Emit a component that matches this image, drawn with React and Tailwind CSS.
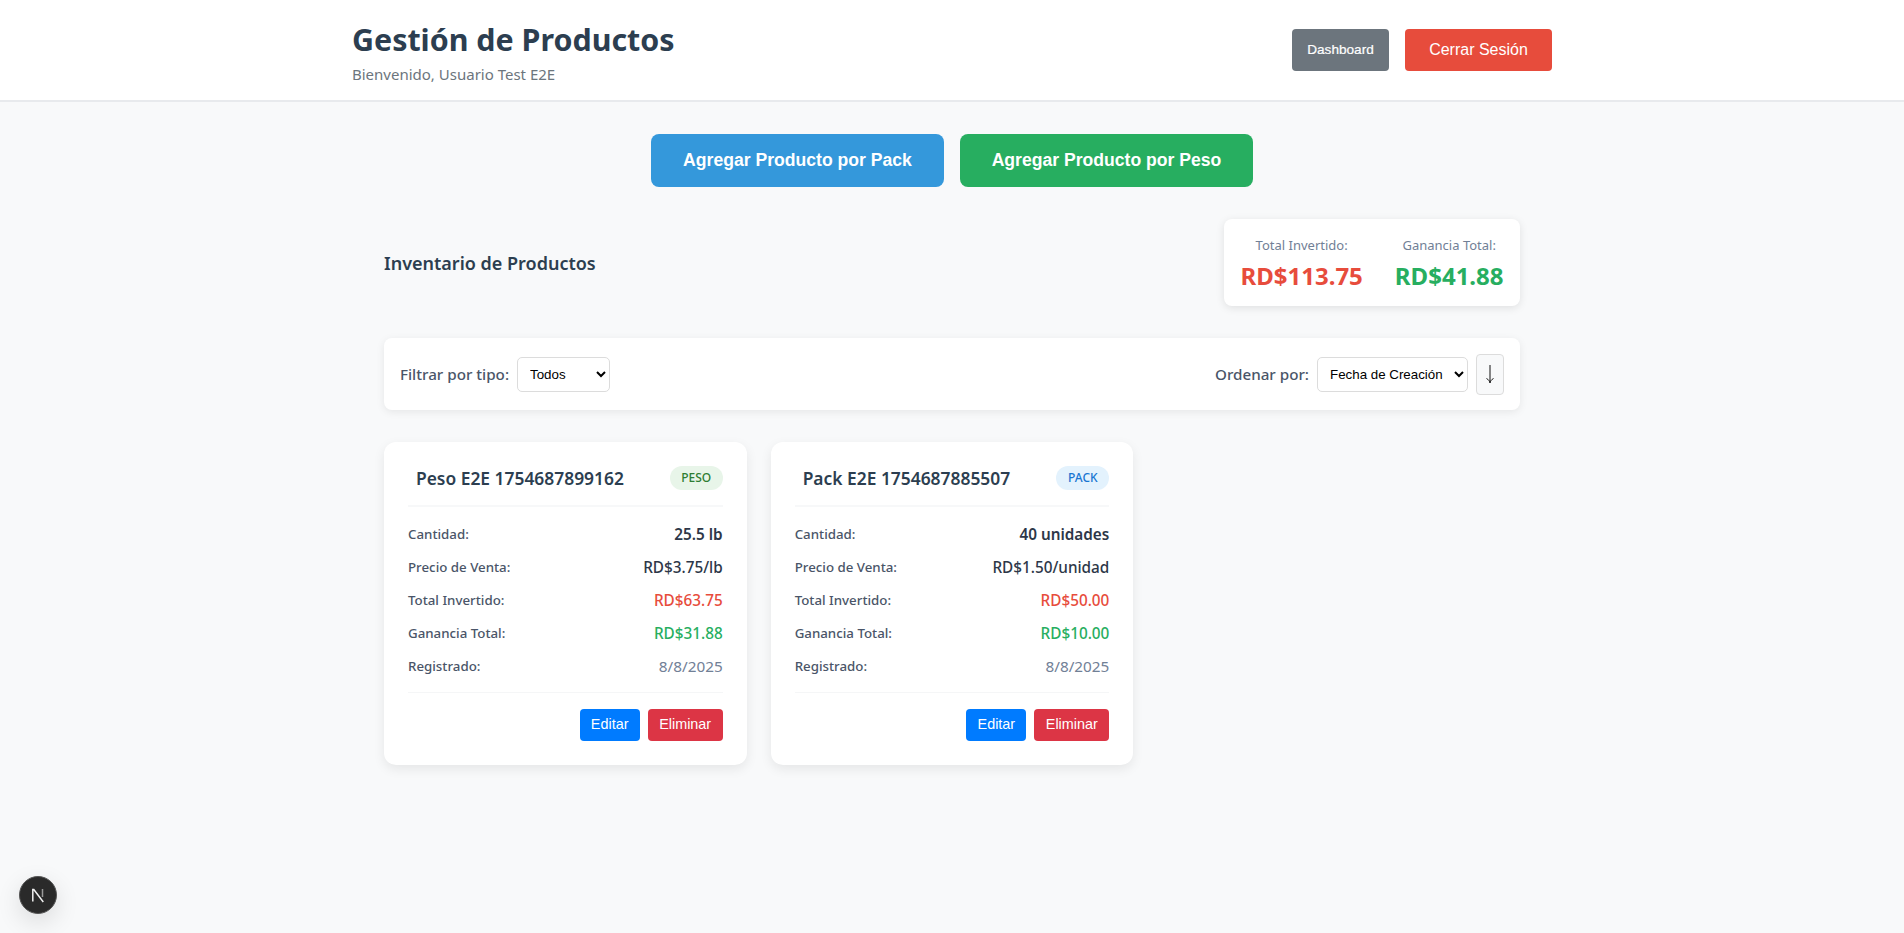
const body = '[font-family:"Noto_Sans","Open_Sans",sans-serif]';

function Row({ label, value, valueClass }) {
  return (
    <div className="flex items-center justify-between h-[33px]">
      <span className="text-[13.3px] font-medium text-[#4a5568]">{label}</span>
      <span className={`text-[15.3px] ${valueClass}`}>{value}</span>
    </div>
  );
}

function Card({ name, badge, badgeClass, qty, price, inv, gain }) {
  return (
    <div className="bg-white rounded-xl shadow-[0_4px_12px_rgba(0,0,0,0.08)] p-6">
      <div className="flex items-center justify-between pb-[15px] border-b-2 border-[#f7f8f9]">
        <span className="ml-[8px] text-[17.4px] leading-6 font-semibold text-[#2c3e50]">{name}</span>
        <span className={`w-[53px] h-6 rounded-full flex items-center justify-center text-[12px] font-medium ${badgeClass}`}>{badge}</span>
      </div>
      <div className="pt-[11px] pb-[9px] border-b border-[#f5f6f7]">
        <Row label="Cantidad:" value={qty} valueClass="font-semibold text-[#2d3748]" />
        <Row label="Precio de Venta:" value={price} valueClass="font-medium text-[#2d3748]" />
        <Row label="Total Invertido:" value={inv} valueClass="font-medium text-[#e74c3c]" />
        <Row label="Ganancia Total:" value={gain} valueClass="font-medium text-[#27ae60]" />
        <Row label="Registrado:" value="8/8/2025" valueClass="text-[#718096]" />
      </div>
      <div className="flex justify-end gap-2 pt-4 [font-family:'Liberation_Sans',Arial,sans-serif]">
        <button className="w-[60px] h-8 rounded bg-[#007bff] text-white text-[14.4px]">Editar</button>
        <button className="w-[75px] h-8 rounded bg-[#dc3545] text-white text-[14.4px]">Eliminar</button>
      </div>
    </div>
  );
}

export default function App() {
  return (
    <div className={`min-h-[933px] bg-[#f8f9fa] relative ${body}`}>
      <header className="h-[102px] bg-white border-b-2 border-[#e8eaed]">
        <div className="w-[1200px] mx-auto h-full flex items-center justify-between">
          <div className="mt-[2px]">
            <h1 className="text-[30.4px] leading-[43px] mb-[2px] font-bold text-[#2c3e50]">Gestión de Productos</h1>
            <p className="text-[15px] leading-[22px] text-[#6c757d]">Bienvenido, Usuario Test E2E</p>
          </div>
          <div className="flex items-center gap-4 [font-family:'Liberation_Sans',Arial,sans-serif]">
            <button className="w-[97px] h-[42px] rounded bg-[#6c757d] text-white text-[13.6px] [-webkit-text-stroke:0.2px_white]">Dashboard</button>
            <button className="w-[147px] h-[42px] rounded bg-[#e74c3c] text-white text-[16px]">Cerrar Sesión</button>
          </div>
        </div>
      </header>

      <main className="w-[1136px] mx-auto">
        <div className="flex justify-center gap-4 pt-8 [font-family:'Liberation_Sans',Arial,sans-serif]">
          <button className="w-[293px] h-[53px] rounded-lg bg-[#3498db] text-white text-[17.6px] font-bold">Agregar Producto por Pack</button>
          <button className="w-[293px] h-[53px] rounded-lg bg-[#27ae60] text-white text-[17.6px] font-bold">Agregar Producto por Peso</button>
        </div>

        <div className="flex items-center justify-between mt-8">
          <h2 className="text-[18px] mt-[2px] font-semibold text-[#2c3e50]">Inventario de Productos</h2>
          <div className="w-[296px] h-[87px] bg-white rounded-lg shadow-[0_2px_8px_rgba(0,0,0,0.1)] flex items-center justify-center gap-8">
            <div className="text-center">
              <div className="text-[13px] leading-5 mt-[1px] text-[#718096]">Total Invertido:</div>
              <div className="text-[24px] leading-[33px] mt-[4px] font-bold text-[#e74c3c]">RD$113.75</div>
            </div>
            <div className="text-center">
              <div className="text-[13px] leading-5 mt-[1px] text-[#718096]">Ganancia Total:</div>
              <div className="text-[24px] leading-[33px] mt-[4px] font-bold text-[#27ae60]">RD$41.88</div>
            </div>
          </div>
        </div>

        <div className="h-[72px] mt-8 bg-white rounded-lg shadow-[0_2px_8px_rgba(0,0,0,0.08)] px-4 flex items-center justify-between">
          <div className="flex items-center gap-2">
            <span className="text-[15.2px] font-medium text-[#4a5568]">Filtrar por tipo:</span>
            <select className="w-[93px] h-[35px] px-[8px] bg-white border border-[#dcdcdc] rounded-[5px] text-[13.33px] text-black [font-family:'Liberation_Sans',Arial,sans-serif]">
              <option>Todos</option>
            </select>
          </div>
          <div className="flex items-center gap-2">
            <span className="text-[15.2px] font-medium text-[#4a5568]">Ordenar por:</span>
            <select className="w-[151px] h-[35px] px-[8px] bg-white border border-[#dcdcdc] rounded-[5px] text-[13.33px] text-black [font-family:'Liberation_Sans',Arial,sans-serif]">
              <option>Fecha de Creación</option>
            </select>
            <button aria-label="Orden descendente" className="w-[28px] h-[41px] bg-[#f8f9fa] border border-[#dcdcdc] rounded flex items-center justify-center">
              <svg width="12" height="20" viewBox="0 0 12 20" fill="none" stroke="#111" strokeWidth="1">
                <path d="M6 1v17" />
                <path d="M2.5 14.5C4.5 15.5 5.5 17 6 19C6.5 17 7.5 15.5 9.5 14.5" />
              </svg>
            </button>
          </div>
        </div>

        <div className="grid grid-cols-3 gap-6 mt-8">
          <Card name="Peso E2E 1754687899162" badge="PESO" badgeClass="bg-[#e8f5e9] text-[#2e7d32]" qty="25.5 lb" price="RD$3.75/lb" inv="RD$63.75" gain="RD$31.88" />
          <Card name="Pack E2E 1754687885507" badge="PACK" badgeClass="bg-[#e3f2fd] text-[#1976d2]" qty="40 unidades" price="RD$1.50/unidad" inv="RD$50.00" gain="RD$10.00" />
        </div>
      </main>

      <div className="absolute left-[19px] bottom-[19px] w-[38px] h-[38px] rounded-full bg-[#2a2a2a] border border-[#555] shadow-[0_8px_24px_rgba(0,0,0,0.12)] flex items-center justify-center">
        <svg width="18" height="18" viewBox="0 0 18 18" fill="none">
          <path d="M3.8 15.5V3.5h1l9.5 12.5" stroke="#f0f0f0" strokeWidth="1.5" />
          <path d="M13.5 3v8" stroke="#9a9a9a" strokeWidth="1.5" />
        </svg>
      </div>
    </div>
  );
}
